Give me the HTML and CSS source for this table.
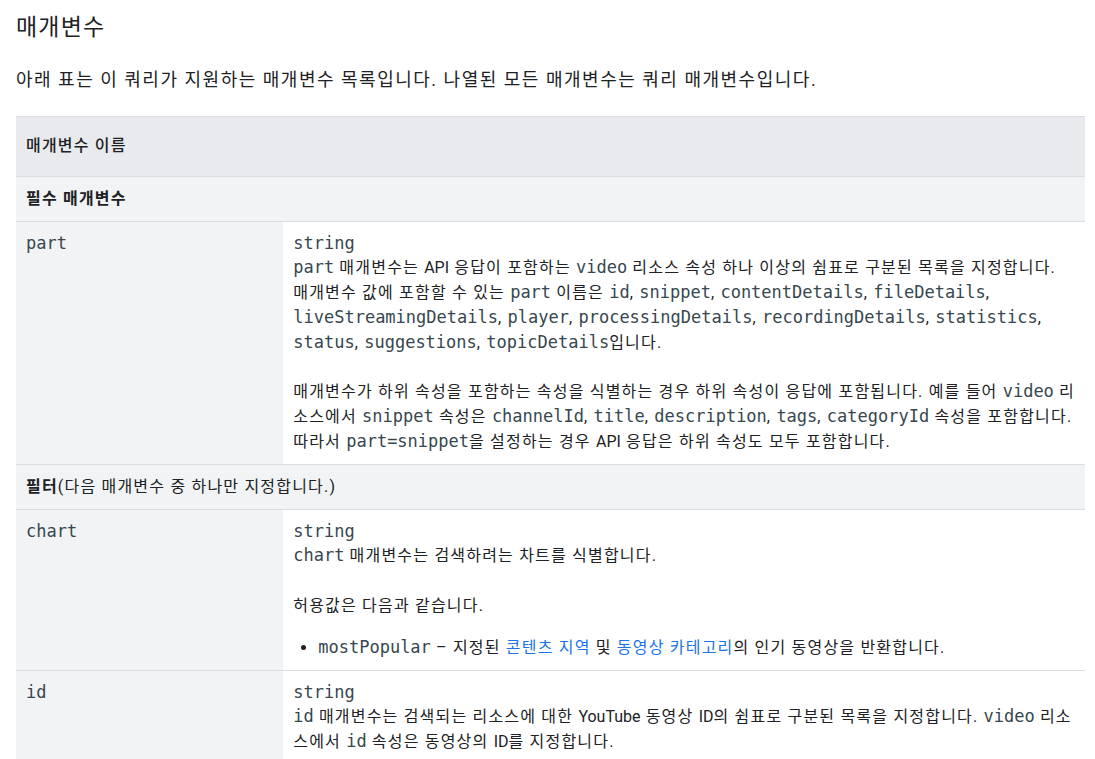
FILE: index.html
```html
<!DOCTYPE html>
<html lang="ko">
<head>
    <meta charset="UTF-8">
    <title>매개변수</title>
    <link rel="stylesheet" href="styles.css">
</head>
<body>
    <h2 class="title">매개변수</h2>
    <p class="intro">아래 표는 이 쿼리가 지원하는 매개변수 목록입니다. 나열된 모든 매개변수는 쿼리 매개변수입니다.</p>

    <table class="params">
        <thead>
            <tr><th colspan="2">매개변수 이름</th></tr>
        </thead>
        <tbody>
            <tr class="group"><td colspan="2"><b>필수 매개변수</b></td></tr>
            <tr>
                <td class="name"><code>part</code></td>
                <td class="desc">
                    <code>string</code><br>
                    <code>part</code> 매개변수는 <span class="en">API</span> 응답이 포함하는 <code>video</code> 리소스 속성 하나 이상의 쉼표로 구분된 목록을 지정합니다. 매개변수 값에 포함할 수 있는 <code>part</code> 이름은 <code>id</code>, <code>snippet</code>, <code>contentDetails</code>, <code>fileDetails</code>, <code>liveStreamingDetails</code>, <code>player</code>, <code>processingDetails</code>, <code>recordingDetails</code>, <code>statistics</code>, <code>status</code>, <code>suggestions</code>, <code>topicDetails</code>입니다.<br><br>
                    매개변수가 하위 속성을 포함하는 속성을 식별하는 경우 하위 속성이 응답에 포함됩니다. 예를 들어 <code>video</code> 리소스에서 <code>snippet</code> 속성은 <code>channelId</code>, <code>title</code>, <code>description</code>, <code>tags</code>, <code>categoryId</code> 속성을 포함합니다. 따라서 <code>part=snippet</code>을 설정하는 경우 <span class="en">API</span> 응답은 하위 속성도 모두 포함합니다.
                </td>
            </tr>
            <tr class="group"><td colspan="2"><b>필터</b>(다음 매개변수 중 하나만 지정합니다.)</td></tr>
            <tr>
                <td class="name"><code>chart</code></td>
                <td class="desc">
                    <code>string</code><br>
                    <code>chart</code> 매개변수는 검색하려는 차트를 식별합니다.<br><br>
                    허용값은 다음과 같습니다.
                    <ul>
                        <li><code>mostPopular</code> – 지정된 <a href="#">콘텐츠 지역</a> 및 <a href="#">동영상 카테고리</a>의 인기 동영상을 반환합니다.</li>
                    </ul>
                </td>
            </tr>
            <tr>
                <td class="name"><code>id</code></td>
                <td class="desc">
                    <code>string</code><br>
                    <code>id</code> 매개변수는 검색되는 리소스에 대한 <span class="en">YouTube</span> 동영상 <span class="en">ID</span>의 쉼표로 구분된 목록을 지정합니다. <code>video</code> 리소스에서 <code>id</code> 속성은 동영상의 <span class="en">ID</span>를 지정합니다.
                </td>
            </tr>
        </tbody>
    </table>
</body>
</html>
```

FILE: styles.css
```css
body {
    font-family: Roboto, "Noto Sans CJK KR", sans-serif;
    color: #202124;
    margin: 0;
    padding: 0 10px 0 16px;
    background-color: #fff;
    letter-spacing: 0.075em;
}

.title {
    font-size: 23px;
    font-weight: 400;
    line-height: 32px;
    margin: 12px 0 0;
}

.intro {
    font-size: 18px;
    line-height: 28px;
    margin: 22px 0 22px;
    letter-spacing: 0.084em;
}

.en {
    letter-spacing: 0;
}

.params {
    width: 100%;
    border-collapse: collapse;
    font-size: 16px;
    line-height: 24.8px;
    border-top: 1px solid #dadce0;
}

.params th {
    background-color: #e8eaed;
    text-align: left;
    font-weight: 500;
    padding: 17px 10px 17px;
}

.params td {
    border-top: 1px solid #dadce0;
    vertical-align: top;
    padding: 10px 10px;
}

.params .group td {
    background-color: #f1f3f4;
    padding: 10px 10px 9px;
}

.params b {
    font-weight: 700;
}

.params .name {
    width: 25%;
    background-color: #f1f3f4;
    padding-right: 10px;
}

.params .desc {
    padding-bottom: 9px;
}

code {
    font-family: "DejaVu Sans Mono", monospace;
    font-size: 17px;
    line-height: 1;
    color: #37474f;
    letter-spacing: 0;
}

.desc ul {
    margin: 17px 0 0;
    padding-left: 25px;
}

a {
    color: #1a73e8;
    text-decoration: none;
}
```
